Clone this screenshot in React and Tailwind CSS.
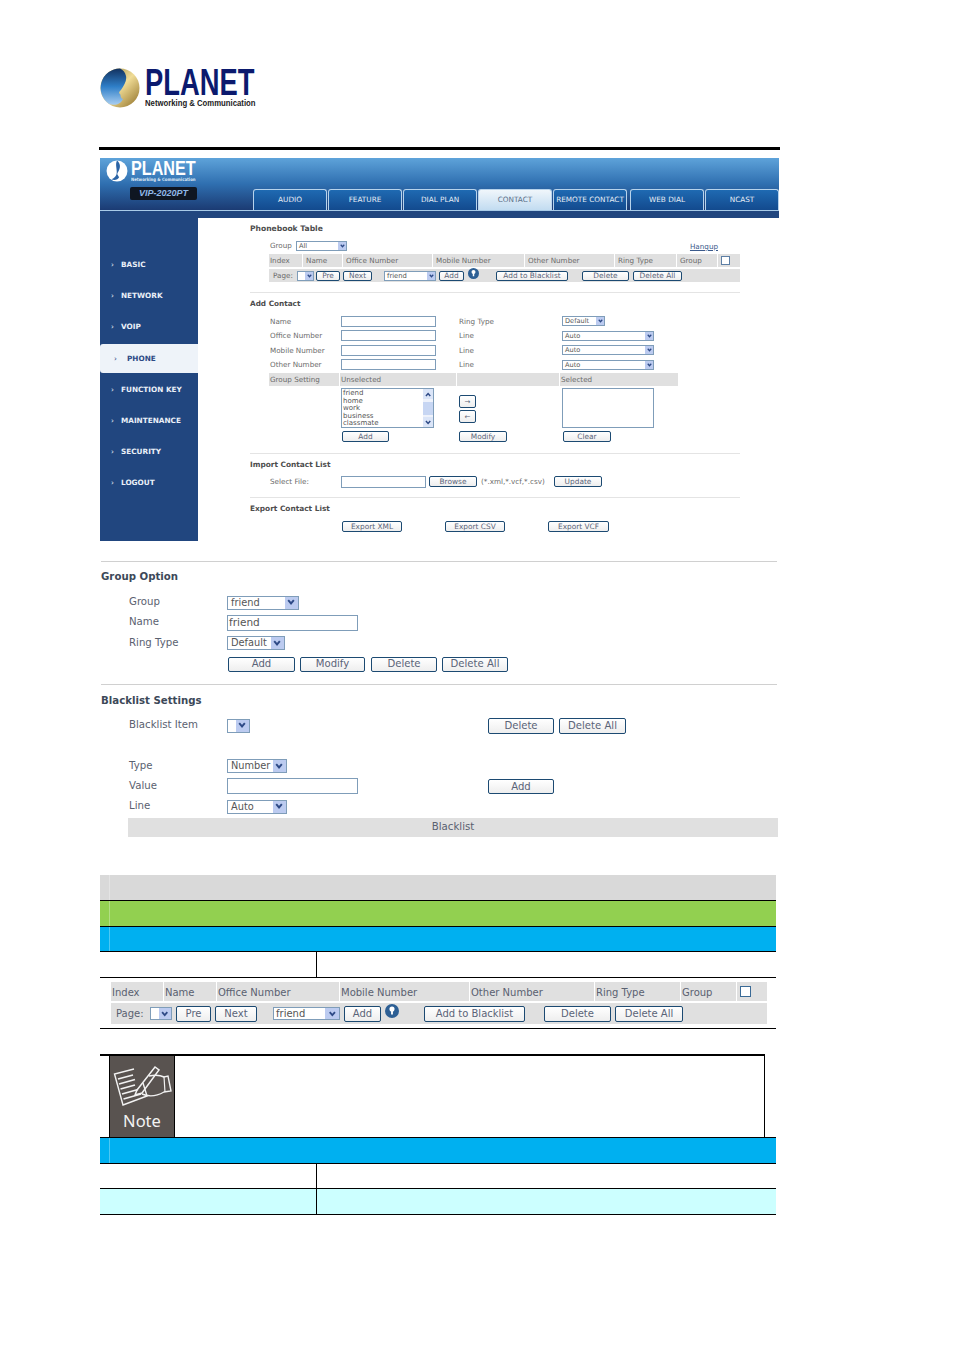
const F = "font-['DejaVu_Sans',sans-serif]";

function Logo() {
  return (
    <svg width="40" height="40" viewBox="0 0 40 40" className="shrink-0">
      <defs>
        <linearGradient id="lb" x1="0" y1="0" x2="0" y2="1">
          <stop offset="0" stopColor="#12315f" />
          <stop offset="0.5" stopColor="#2f7fc8" />
          <stop offset="1" stopColor="#a8cdf0" />
        </linearGradient>
        <linearGradient id="lg" x1="0" y1="0" x2="1" y2="1">
          <stop offset="0" stopColor="#8a7a3a" />
          <stop offset="0.5" stopColor="#f0dc96" />
          <stop offset="1" stopColor="#8d6d24" />
        </linearGradient>
      </defs>
      <circle cx="20" cy="20" r="19.5" fill="url(#lg)" />
      <path d="M20 .5A19.5 19.5 0 0 0 9 36C15 38 21 36 23 31C20 30 21 27 20 26C18 25 20 23 21 22C24 17 27 13 26 8C25 4 23 2 20 .5Z" fill="url(#lb)" />
    </svg>
  );
}

function Chev({ w = 12, h = 12, light, up }) {
  return (
    <span style={{ width: w, height: h }} className={"flex items-center justify-center shrink-0 " + (light ? "bg-[#dbe5f8]" : "bg-[#bccbf0]")}>
      <svg width={Math.max(w * 0.62, 5)} height={Math.max(h * 0.5, 4)} viewBox="0 0 10 8">
        <path d={up ? "M1.5 6.5L5 2.5L8.5 6.5" : "M1.5 1.5L5 5.5L8.5 1.5"} fill="none" stroke="#2e4a86" strokeWidth="2.4" />
      </svg>
    </span>
  );
}

function Sel({ w, h, text, size, ch, chW, ml = 0, tx = "pl-[2px] pt-px" }) {
  return (
    <div style={{ width: w, height: h, marginLeft: ml }} className="flex items-center justify-between border border-[#7f9db9] bg-white shrink-0 overflow-hidden">
      <span style={{ fontSize: size }} className={"text-[#555] leading-none whitespace-nowrap " + tx}>{text}</span>
      <Chev w={chW || ch} h={ch} />
    </div>
  );
}

function Btn({ w, h, text, size, ml = 0 }) {
  return (
    <div style={{ width: w, height: h, marginLeft: ml, fontSize: size }}
      className="flex items-center justify-center shrink-0 rounded-[2px] border pt-px text-[#5b6478] leading-none whitespace-nowrap bg-gradient-to-b from-white to-[#eeeeee] border-[#1c4a72]">
      {text}
    </div>
  );
}

function Inp({ w, h, text, size, ml = 0 }) {
  return (
    <div style={{ width: w, height: h, marginLeft: ml, fontSize: size }} className="flex items-center pl-px border border-[#7f9db9] bg-white shrink-0 text-[#555] leading-none">
      {text}
    </div>
  );
}

function Info({ s = 12 }) {
  return (
    <svg width={s} height={s} viewBox="0 0 12 12" className="shrink-0">
      <circle cx="6" cy="6" r="6" fill="#2d5f94" />
      <circle cx="6" cy="4.3" r="2.2" fill="#fff" />
      <rect x="5.2" y="5" width="1.6" height="4" fill="#fff" />
    </svg>
  );
}

const tabs = ["AUDIO", "FEATURE", "DIAL PLAN", "CONTACT", "REMOTE CONTACT", "WEB DIAL", "NCAST"];
const menu = ["BASIC", "NETWORK", "VOIP", "PHONE", "FUNCTION KEY", "MAINTENANCE", "SECURITY", "LOGOUT"];

function Tab({ t }) {
  const active = t === "CONTACT";
  return (
    <div style={{ marginLeft: t === "WEB DIAL" ? 2 : 0 }} className={"w-[74px] h-[21px] rounded-t-[3px] border border-b-0 border-[#b7d3ec] flex items-center justify-center text-[7.3px] leading-none whitespace-nowrap " +
      (active ? "bg-gradient-to-b from-[#f0f6fb] to-[#c2dcf1] text-[#5b6f88]" : "bg-gradient-to-b from-[#1f6ab2] to-[#134a8e] text-[#e8eef6]")}>
      {t}
    </div>
  );
}

function Divider() {
  return <div className="w-[490px] h-px bg-[#e4e4e4]" />;
}

function Shot() {
  return (
    <div className="w-[679px] h-[383px] ml-[100px] mt-[8px] flex flex-col">
      <div className="h-[52px] flex bg-gradient-to-b from-[#5ea3da] via-[#2f6fb0] to-[#1b3b73]">
        <div className="w-[153px] shrink-0 pl-[6px] pt-[1px] flex flex-col">
          <div className="flex items-center gap-[3px] h-[23px]">
            <svg width="22" height="22" viewBox="0 0 40 40" className="shrink-0">
              <circle cx="20" cy="20" r="19" fill="#fff" />
              <path d="M20 1C26 6 27 13 23 20C21 23 20 25 21 27C22 28 22 30 24 31C22 36 15 38 10 35C28 28 14 12 20 1Z" fill="#2a63a5" />
            </svg>
            <div className="flex flex-col">
              <span className="font-['Liberation_Sans',sans-serif] font-bold text-[21px] leading-[17px] text-white scale-x-[0.77] origin-left">PLANET</span>
              <span className="text-[4.5px] leading-[5px] font-bold text-[#dfe9f5] whitespace-nowrap mt-[1px] scale-x-[0.85] origin-left">Networking &amp; Communication</span>
            </div>
          </div>
          <div className="ml-[24px] mt-[5px] w-[67px] h-[13px] rounded-[2px] bg-[#0f1622] flex items-center justify-center font-['Liberation_Sans',sans-serif] italic font-bold text-[9px] text-[#8fb8e8] leading-none">VIP-2020PT</div>
        </div>
        <div className="flex items-end gap-px h-[52px]">
          {tabs.map((t) => <Tab key={t} t={t} />)}
        </div>
      </div>
      <div className="h-px bg-[#a9cbe8]" />
      <div className="h-[7px] bg-[#21467f]" />
      <div className="flex flex-1 min-h-0">
        <div className="w-[98px] bg-[#21467f] shrink-0 flex flex-col pt-[31px]">
          {menu.map((m) => {
            const a = m === "PHONE";
            return (
              <div key={m} className="h-[31.2px] shrink-0 flex items-center font-bold text-[7.3px] leading-none whitespace-nowrap">
                <div className={"flex items-center w-full " + (a ? "bg-[#eef3f9] text-[#2d4a85] rounded-l-[3px] pl-[14px] h-[29px]" : "text-[#eaf0f8] pl-[11px]")}>
                  <span className="font-normal w-[10px]">›</span>
                  <span className={a ? "ml-[3px]" : ""}>{m}</span>
                </div>
              </div>
            );
          })}
        </div>
        <div className="flex-1 bg-white pl-[52px] text-[#6b6b6b] text-[7.2px] leading-none">
          <div className="h-[21px] flex items-center font-bold text-[#4d4d4d] text-[7.6px] pt-[1px]">Phonebook Table</div>
          <div className="h-[13px] flex items-center pl-[20px] w-[468px]">
            <span className="w-[26px]">Group</span>
            <Sel w={51} h={10} text="All" size={6.6} ch={8} />
            <span className="ml-auto underline text-[#3a5a8c] translate-y-px">Hangup</span>
          </div>
          <div className="ml-[19px] mt-[2px] w-[471px] h-[13px] grid grid-cols-[34px_40px_90px_92px_90px_62px_41px_22px] bg-[#e0e0e0] items-center">
            {["Index", "Name", "Office Number", "Mobile Number", "Other Number", "Ring Type", "Group"].map((t, i) => (
              <span key={t} className={"h-full flex items-center border-r border-white whitespace-nowrap " + (i === 0 ? "pl-px" : "pl-[3px]")}>{t}</span>
            ))}
            <span className="flex items-center pl-[3px]"><span className="w-[9px] h-[9px] border border-[#5d7fa5] bg-white block" /></span>
          </div>
          <div className="ml-[19px] mt-[2px] w-[471px] h-[13px] bg-[#e0e0e0] flex items-center">
            <span className="ml-[4px] w-[24px]">Page:</span>
            <Sel w={17} h={10} text="" size={6} ch={8} />
            <Btn w={24} h={10} text="Pre" size={7.4} ml={2} />
            <Btn w={29} h={10} text="Next" size={7.4} ml={3} />
            <Sel w={52} h={10} text="friend" size={6.8} ch={8} ml={12} />
            <Btn w={25} h={10} text="Add" size={7.4} ml={3} />
            <span className="ml-[4px] -translate-y-[2px]"><Info s={11} /></span>
            <Btn w={72} h={10} text="Add to Blacklist" size={7.4} ml={17} />
            <Btn w={47} h={10} text="Delete" size={7.4} ml={14} />
            <Btn w={49} h={10} text="Delete All" size={7.4} ml={4} />
          </div>
          <div className="mt-[10px]"><Divider /></div>

          <div className="h-[21px] flex items-center font-bold text-[#4d4d4d] text-[7.3px]">Add Contact</div>
          <div className="flex flex-col">
            {[["Name", "Ring Type", 43, "Default"], ["Office Number", "Line", 92, "Auto"], ["Mobile Number", "Line", 92, "Auto"], ["Other Number", "Line", 92, "Auto"]].map(([a, b, w, v]) => (
              <div key={a} className="h-[14.5px] flex items-center pl-[20px]">
                <span className="w-[71px]">{a}</span>
                <Inp w={95} h={11} />
                <span className="ml-[23px] w-[103px]">{b}</span>
                <Sel w={w} h={10} text={v} size={6.6} ch={8} />
              </div>
            ))}
          </div>
          <div className="ml-[19px] mt-[1px] h-[13px] grid grid-cols-[71px_117px_103px_118px] w-[409px] items-center">
            {["Group Setting", "Unselected", "", "Selected"].map((t, i) => (
              <span key={i} className="bg-[#e0e0e0] h-full flex items-center pl-[1px] border-r border-white last:border-r-0">{t}</span>
            ))}
          </div>
          <div className="flex h-[41px] mt-[2px]">
            <div className="ml-[91px] w-[93px] h-[40px] border border-[#7f9db9] flex justify-between overflow-hidden text-[7px] text-[#555]">
              <div className="pl-px pt-px leading-[7.6px]">friend<br />home<br />work<br />business<br />classmate</div>
              <div className="w-[10px] bg-[#eef2fb] flex flex-col justify-between items-center">
                <Chev w={10} h={10} light up />
                <div className="w-[10px] h-[13px] bg-[#c7d6f3]" />
                <Chev w={10} h={10} light />
              </div>
            </div>
            <div className="ml-[25px] w-[18px] flex flex-col gap-[2px] pt-[7px]">
              <Btn w={17} h={13} text="→" size={7} />
              <Btn w={17} h={13} text="←" size={7} />
            </div>
            <div className="ml-[85px] w-[92px] h-[40px] border border-[#7f9db9]" />
          </div>
          <div className="flex h-[12px] mt-[2px] ml-[92px]">
            <Btn w={47} h={11} text="Add" size={7.4} />
            <Btn w={48} h={11} text="Modify" size={7.4} ml={70} />
            <Btn w={48} h={11} text="Clear" size={7.4} ml={56} />
          </div>
          <div className="mt-[10px]"><Divider /></div>
          <div className="h-[21px] flex items-center font-bold text-[#4d4d4d] text-[7.4px]">Import Contact List</div>
          <div className="h-[13px] flex items-center pl-[20px]">
            <span className="w-[71px]">Select File:</span>
            <Inp w={85} h={12} />
            <Btn w={48} h={11} text="Browse" size={7.4} ml={3} />
            <span className="ml-[4px] w-[73px] whitespace-nowrap">(*.xml,*.vcf,*.csv)</span>
            <Btn w={48} h={11} text="Update" size={7.4} />
          </div>
          <div className="mt-[9px]"><Divider /></div>
          <div className="h-[21px] flex items-center font-bold text-[#4d4d4d] text-[7.4px]">Export Contact List</div>
          <div className="mt-[2px] flex ml-[92px]">
            <Btn w={60} h={11} text="Export XML" size={7.4} />
            <Btn w={60} h={11} text="Export CSV" size={7.4} ml={43} />
            <Btn w={61} h={11} text="Export VCF" size={7.4} ml={43} />
          </div>
        </div>
      </div>
    </div>
  );
}

function Row({ h, label, children }) {
  return (
    <div style={{ height: h }} className="flex items-center pl-[28px]">
      <span className="w-[98px] shrink-0">{label}</span>
      {children}
    </div>
  );
}

function Options() {
  return (
    <div className="ml-[101px] w-[677px] mt-[20px] text-[10.2px] leading-none text-[#5a6170]">
      <div className="w-[676px] h-px bg-[#d0d0d0]" />
      <div className="h-[31px] flex items-center font-bold text-[#3c4858] text-[10.2px]">Group Option</div>
      <Row h={19} label="Group"><Sel w={72} h={14} text="friend" size={9.8} ch={13} tx="pl-[3px]" /></Row>
      <Row h={21} label="Name"><Inp w={131} h={16} text="friend" size={10.5} /></Row>
      <Row h={20} label="Ring Type"><Sel w={58} h={14} text="Default" size={9.8} ch={13} tx="pl-[3px]" /></Row>
      <div className="flex h-[22px] items-center pl-[127px]">
        <Btn w={67} h={15} text="Add" size={10.1} />
        <Btn w={65} h={15} text="Modify" size={10.1} ml={5} />
        <Btn w={66} h={15} text="Delete" size={10.1} ml={6} />
        <Btn w={66} h={15} text="Delete All" size={10.1} ml={5} />
      </div>
      <div className="w-[676px] mt-[9px] h-px bg-[#d0d0d0]" />
      <div className="h-[32px] pt-px flex items-center font-bold text-[#3c4858] text-[10.2px]">Blacklist Settings</div>
      <Row h={17} label="Blacklist Item">
        <Sel w={23} h={14} text="" size={9} ch={13} tx="" />
        <Btn w={66} h={16} text="Delete" size={10.1} ml={238} />
        <Btn w={67} h={16} text="Delete All" size={10.1} ml={5} />
      </Row>
      <div className="h-[22px]" />
      <Row h={20} label="Type"><Sel w={60} h={14} text="Number" size={9.8} ch={13} tx="pl-[3px]" /></Row>
      <Row h={20.5} label="Value">
        <Inp w={131} h={16} />
        <Btn w={66} h={15} text="Add" size={10.1} ml={130} />
      </Row>
      <Row h={20} label="Line"><Sel w={60} h={14} text="Auto" size={9.8} ch={13} tx="pl-[3px]" /></Row>
      <div className="mt-[1.5px] ml-[27px] h-[19px] w-[650px] bg-[#e0e0e0] flex items-center justify-center">Blacklist</div>
    </div>
  );
}

function Band({ h, cls }) {
  return (
    <div style={{ height: h }} className={"w-[676px] box-border pl-[9px] " + cls}>
      <div className="w-px h-full bg-white/30" />
    </div>
  );
}

function SplitRow({ h, cls = "" }) {
  return (
    <div style={{ height: h }} className={"w-[676px] flex border-b border-black " + cls}>
      <div className="w-[217px] border-r border-black" />
    </div>
  );
}

function TableShot() {
  const cells = [["Index", 53], ["Name", 53], ["Office Number", 123], ["Mobile Number", 130], ["Other Number", 125], ["Ring Type", 86], ["Group", 56]];
  return (
    <div className="h-[51px] w-[676px] border-b border-black pt-[4px] pl-[11px] text-[10px] leading-none text-[#5a6170]">
      <div className="w-[656px] h-[19px] flex gap-px">
        {cells.map(([t, w]) => (
          <span key={t} style={{ width: w - 1 }} className="bg-[#e0e0e0] h-full flex items-center pl-px pt-[2px] shrink-0 whitespace-nowrap">{t}</span>
        ))}
        <span className="bg-[#e0e0e0] h-full flex-1 flex items-center pl-[3px]"><span className="w-[11px] h-[11px] border border-[#3a6a96] bg-white" /></span>
      </div>
      <div className="w-[656px] h-[21px] mt-[2px] bg-[#e0e0e0] flex items-center">
        <span className="ml-[5px] w-[34px]">Page:</span>
        <Sel w={22} h={13} text="" size={9} ch={12} />
        <Btn w={35} h={16} text="Pre" size={10} ml={4} />
        <Btn w={42} h={16} text="Next" size={10} ml={4} />
        <Sel w={67} h={13} text="friend" size={10} ch={12} chW={14} ml={16} />
        <Btn w={37} h={16} text="Add" size={10} ml={4} />
        <span className="ml-[4px] -translate-y-[3px]"><Info s={14} /></span>
        <Btn w={101} h={16} text="Add to Blacklist" size={10} ml={25} />
        <Btn w={67} h={16} text="Delete" size={10} ml={19} />
        <Btn w={68} h={16} text="Delete All" size={10} ml={4} />
      </div>
    </div>
  );
}

function NoteIcon() {
  return (
    <div className="w-[66px] h-[81px] bg-[#595350] flex flex-col items-center shrink-0 border-x border-black">
      <svg width="64" height="54" viewBox="0 0 64 54" className="shrink-0" fill="none" stroke="#f2f2f2">
        <path d="M24 13L4.5 18L13 49L37 40L33 27" strokeWidth="1.4" />
        <path d="M8 23L23 19M9 28L25 23.5M10.5 33L25 29M12 38L28 33.5M13.5 43L31 38" strokeWidth="1.7" />
        <path d="M27 34L45 11L49 14L32 37L25 39Z" strokeWidth="1.5" />
        <path d="M39 20C44 19 50 19 54 21L58 20L61 35L54 36C47 40 39 41 32 38" strokeWidth="1.4" />
        <path d="M54 21L55 36" strokeWidth="1.2" />
      </svg>
      <span className="font-['Noto_Sans',sans-serif] text-[16.5px] leading-none text-[#f2f2f2] mt-[3px]">Note</span>
    </div>
  );
}

export default function App() {
  return (
    <div className={"w-[954px] h-[1350px] bg-white overflow-hidden pt-[68px] " + F}>
      <div className="ml-[100px] h-[40px] flex items-start gap-[5px]">
        <Logo />
        <div className="flex flex-col pt-[1px]">
          <span className="font-['Liberation_Sans',sans-serif] font-bold text-[36px] leading-[27px] text-[#0b1a6e] scale-x-[0.76] origin-left">PLANET</span>
          <span className="font-['Liberation_Sans',sans-serif] font-bold text-[9px] leading-[10px] text-[#222] whitespace-nowrap mt-[2px] scale-x-[0.86] origin-left">Networking &amp; Communication</span>
        </div>
      </div>
      <div className="ml-[99px] mt-[39px] w-[681px] h-[3px] bg-black" />
      <Shot />
      <Options />
      <div className="ml-[100px] mt-[38px]">
        <Band h={25} cls="bg-[#d9d9d9]" />
        <Band h={26} cls="bg-[#92d050] border-t border-black" />
        <Band h={26} cls="bg-[#00b0f0] border-y border-black" />
        <SplitRow h={26} />
        <TableShot />
        <div className="h-[25px]" />
        <div className="w-[665px] h-[83px] border-t-2 border-black border-r flex pl-[9px]">
          <NoteIcon />
        </div>
        <Band h={27} cls="bg-[#00b0f0] border-y border-black" />
        <SplitRow h={25} />
        <SplitRow h={26} cls="bg-[#ccffff]" />
      </div>
    </div>
  );
}
